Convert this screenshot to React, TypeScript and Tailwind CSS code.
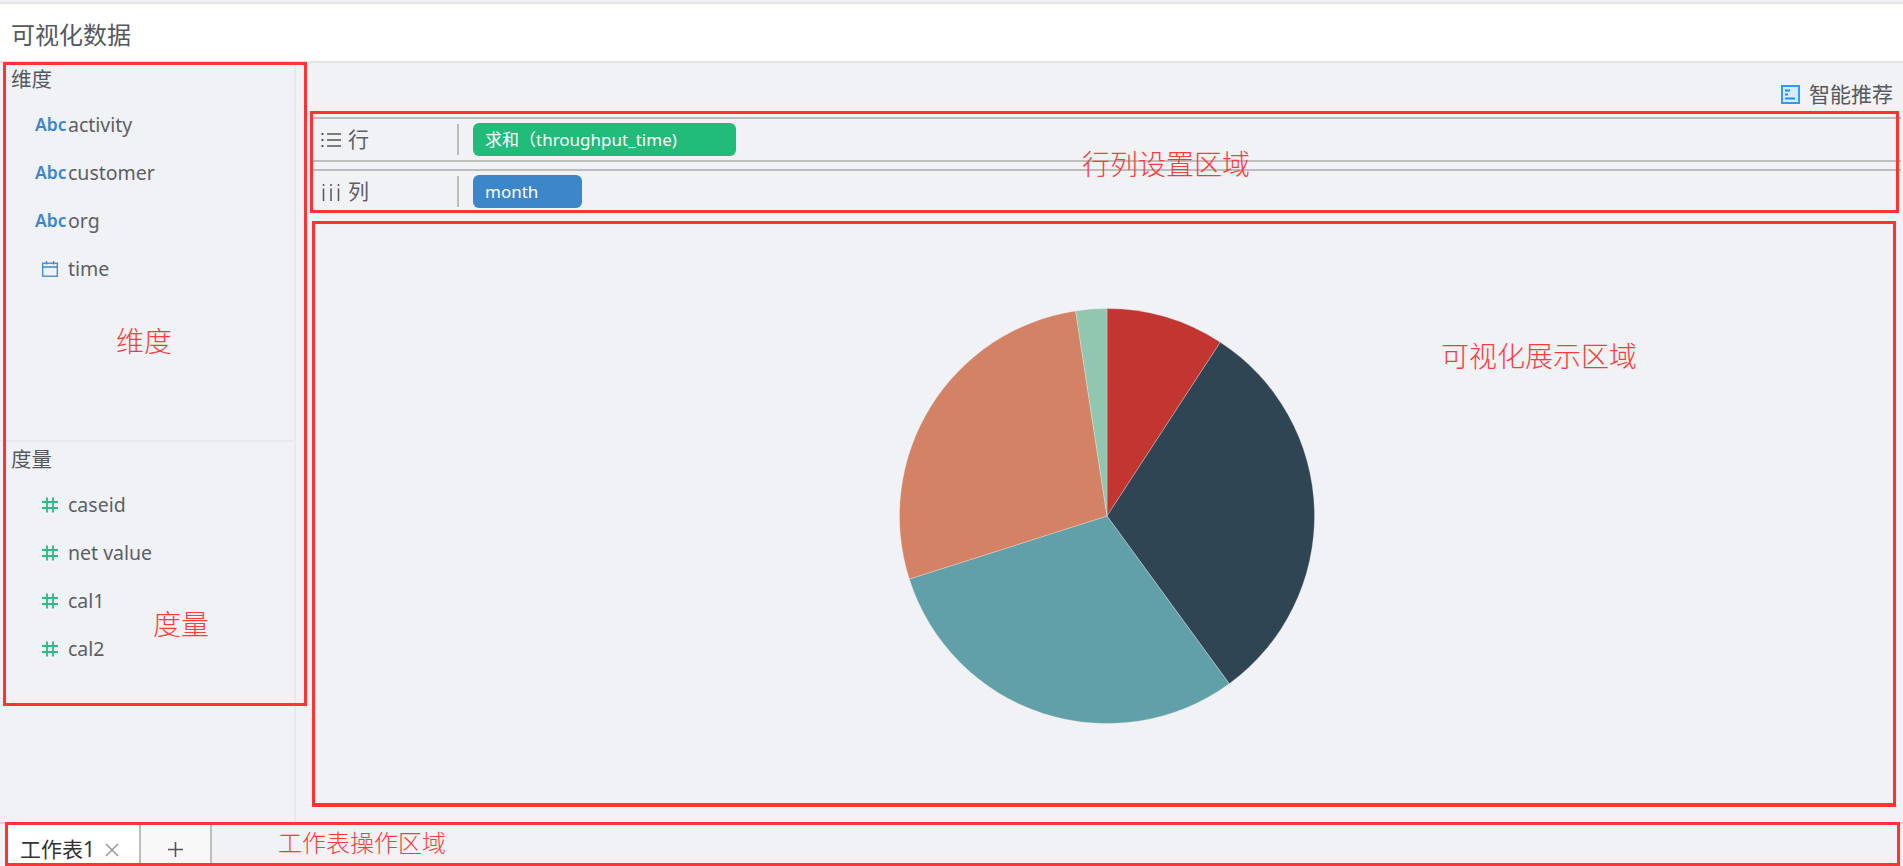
import React from 'react';

const font = "font-['Noto_Sans','Noto_Sans_CJK_SC',sans-serif]";

const AbcIcon = () => (
  <span className="w-[33px] text-[17.5px] font-semibold text-[#3d86d0] leading-none">Abc</span>
);

const CalendarIcon = () => (
  <span className="w-[33px] pl-[7px]">
    <svg width="16" height="16" viewBox="0 0 16 16" fill="none" stroke="#3d86d0" strokeWidth="1.3">
      <rect x="0.7" y="2.2" width="14.6" height="13" />
      <path d="M0.7 6h14.6M4.5 0v3.5M11.5 0v3.5" />
    </svg>
  </span>
);

const HashIcon = () => (
  <span className="w-[33px] pl-[7px]">
    <svg width="16" height="16" viewBox="0 0 16 16" fill="none" stroke="#2dbb7f" strokeWidth="1.8">
      <path d="M5 0.5v15M11 0.5v15M0 5h16M0 11h16" />
    </svg>
  </span>
);

const FieldRow = ({ icon, name }: { icon: React.ReactNode; name: string }) => (
  <div className="flex h-12 items-center pl-[35px] text-[19.5px] text-[#5c5f66]">
    {icon}
    <span>{name}</span>
  </div>
);

const ListIcon = () => (
  <svg width="20" height="16" viewBox="0 0 20 16" fill="none" stroke="#555" strokeWidth="1.5">
    <path d="M6 2h14M6 8h14M6 14h14" />
    <path d="M0.5 2h2M0.5 8h2M0.5 14h2" strokeWidth="2" />
  </svg>
);

const ColumnsIcon = () => (
  <svg width="20" height="18" viewBox="0 0 20 18" fill="none" stroke="#555" strokeWidth="1.5">
    <path d="M2.5 5.5V18M10 5.5V18M17.5 5.5V18" />
    <path d="M2.5 1v2M10 1v2M17.5 1v2" />
  </svg>
);

const ShelfRow = ({
  icon,
  label,
  pill,
  pillClass,
  className,
}: {
  icon: React.ReactNode;
  label: string;
  pill: string;
  pillClass: string;
  className: string;
}) => (
  <div className={`flex items-center border-t-2 border-[#bdbdbd] ${className}`}>
    <div className="flex w-[147px] items-center gap-[7px] pl-[11px] pt-[1px] text-[21px] text-[#5c5f66]">
      <span className="flex w-[20px] items-center">{icon}</span>
      <span>{label}</span>
    </div>
    <div className="h-[31px] w-[2px] bg-[#bdbdbd]" />
    <div className={`ml-[14px] flex h-[33px] items-center rounded-[6px] pl-[12px] text-[17px] text-white ${pillClass}`}>
      {pill}
    </div>
  </div>
);

// pie wedge, angles clockwise from 12 o'clock
const wedge = (from: number, to: number) => {
  const r = 207.5;
  const cx = 208;
  const cy = 208;
  const pt = (a: number) => {
    const rad = (a * Math.PI) / 180;
    return `${cx + r * Math.sin(rad)} ${cy - r * Math.cos(rad)}`;
  };
  return `M${cx} ${cy}L${pt(from)}A${r} ${r} 0 ${to - from > 180 ? 1 : 0} 1 ${pt(to)}Z`;
};

const slices = [
  { from: 0, to: 33.1, color: '#c23531' },
  { from: 33.1, to: 143.9, color: '#2f4554' },
  { from: 143.9, to: 252.3, color: '#61a0a8' },
  { from: 252.3, to: 351.3, color: '#d48265' },
  { from: 351.3, to: 360, color: '#91c7ae' },
];

const PieChart = () => (
  <svg width="416" height="416" viewBox="0 0 416 416">
    {slices.map((s) => (
      <path key={s.color} d={wedge(s.from, s.to)} fill={s.color} stroke="#f1f2f6" strokeWidth="0.3" />
    ))}
  </svg>
);

const annotation = "absolute font-['Noto_Sans_CJK_SC',sans-serif] font-light leading-none text-[#ff3b3b]";
const redBox = 'pointer-events-none absolute border-[3px] border-[#ff3333]';

export default function App() {
  return (
    <div className={`relative flex h-[866px] w-full flex-col overflow-hidden bg-[#f1f2f6] pt-[2px] ${font}`}>
      {/* Page title */}
      <div className="flex h-[61px] shrink-0 items-center border-y-2 border-y-[#e4e4e4] bg-white pl-[11px] pt-[5px] text-[24px] text-[#55585e]">
        可视化数据
      </div>

      <div className="flex min-h-0 flex-1">
        {/* Field list */}
        <div className="flex w-[296px] shrink-0 flex-col border-r-2 border-[#e8e9ec]">
          <div className="h-[379px] border-b-2 border-[#e8e9ec]">
            <div className="mb-[5px] flex h-[33px] items-center pl-[11px] text-[20.5px] text-[#55585e]">维度</div>
            <FieldRow icon={<AbcIcon />} name="activity" />
            <FieldRow icon={<AbcIcon />} name="customer" />
            <FieldRow icon={<AbcIcon />} name="org" />
            <FieldRow icon={<CalendarIcon />} name="time" />
          </div>
          <div>
            <div className="mb-[5px] flex h-[34px] items-center pl-[11px] text-[20.5px] text-[#55585e]">度量</div>
            <FieldRow icon={<HashIcon />} name="caseid" />
            <FieldRow icon={<HashIcon />} name="net value" />
            <FieldRow icon={<HashIcon />} name="cal1" />
            <FieldRow icon={<HashIcon />} name="cal2" />
          </div>
        </div>

        {/* Main area */}
        <div className="flex min-w-0 flex-1 flex-col pl-[14px] pr-[2px]">
          <div className="flex h-[54px] shrink-0 items-center justify-end gap-[9px] pr-[8px] pt-[9px] text-[21px] text-[#55585e]">
            <svg width="19" height="19" viewBox="0 0 19 19" fill="none">
              <rect x="1" y="1" width="17" height="17" fill="#d6ebff" stroke="#2f9bff" strokeWidth="2" />
              <path d="M4 5.5h5M4 9.5h3M4 13.5h10" stroke="#1890ff" strokeWidth="2" />
            </svg>
            <span>智能推荐</span>
          </div>
          <ShelfRow
            icon={<ListIcon />}
            label="行"
            pill="求和（throughput_time)"
            pillClass="w-[263px] bg-[#21bb7a]"
            className="h-[45px] border-b-2 border-b-[#bdbdbd]"
          />
          <div className="h-[7px]" />
          <ShelfRow
            icon={<ColumnsIcon />}
            label="列"
            pill="month"
            pillClass="w-[109px] bg-[#3b87c9]"
            className="h-[43px]"
          />
          <div className="flex flex-1 justify-center pl-[2px] pt-[96px]">
            <PieChart />
          </div>
        </div>
      </div>

      {/* Sheet tabs */}
      <div className="flex h-[44px] shrink-0 border-t-2 border-[#d5d5d5] pl-[8px] text-[21px] text-[#333]">
        <div className="flex w-[131px] items-center gap-[10px] bg-white pl-[12px] pt-[10px]">
          <span>工作表1</span>
          <svg width="14" height="14" viewBox="0 0 14 14" stroke="#999" strokeWidth="1.5">
            <path d="M1 1l12 12M13 1L1 13" />
          </svg>
        </div>
        <div className="flex w-[73px] items-center justify-center border-x-2 border-[#bdbdbd] bg-[#f8f8f8] pt-[9px]">
          <svg width="15" height="15" viewBox="0 0 15 15" stroke="#555" strokeWidth="1.6">
            <path d="M0 7.5h15M7.5 0v15" />
          </svg>
        </div>
      </div>

      {/* Red annotations drawn over the screenshot */}
      <div className={`${redBox} left-[3px] top-[62px] h-[644px] w-[304px]`} />
      <div className={`${redBox} left-[310px] top-[111px] h-[102px] w-[1589px]`} />
      <div className={`${redBox} left-[312px] top-[221px] h-[586px] w-[1584px] border-b-4`} />
      <div className={`${redBox} left-[5px] top-[822px] h-[44px] w-[1895px]`} />
      <span className={`${annotation} left-[116px] top-[326px] text-[28px]`}>维度</span>
      <span className={`${annotation} left-[153px] top-[609px] text-[28px]`}>度量</span>
      <span className={`${annotation} left-[1082px] top-[149px] text-[28px]`}>行列设置区域</span>
      <span className={`${annotation} left-[1441px] top-[341px] text-[28px]`}>可视化展示区域</span>
      <span className={`${annotation} left-[278px] top-[830px] text-[24px]`}>工作表操作区域</span>
    </div>
  );
}
